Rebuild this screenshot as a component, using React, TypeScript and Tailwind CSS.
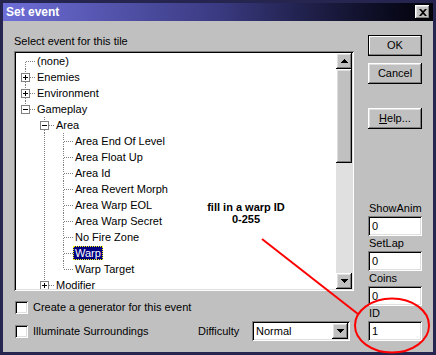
import React from 'react';

type Row = {
    label: string;
    level: number;
    guides: boolean[];
    top: boolean;
    bottom: boolean;
    box?: '+' | '-';
    selected?: boolean;
};

const L2 = [false, true];

const rows: Row[] = [
    { label: '(none)', level: 0, guides: [], top: false, bottom: true },
    { label: 'Enemies', level: 0, guides: [], top: true, bottom: true, box: '+' },
    { label: 'Environment', level: 0, guides: [], top: true, bottom: true, box: '+' },
    { label: 'Gameplay', level: 0, guides: [], top: true, bottom: false, box: '-' },
    { label: 'Area', level: 1, guides: [false], top: true, bottom: true, box: '-' },
    { label: 'Area End Of Level', level: 2, guides: L2, top: true, bottom: true },
    { label: 'Area Float Up', level: 2, guides: L2, top: true, bottom: true },
    { label: 'Area Id', level: 2, guides: L2, top: true, bottom: true },
    { label: 'Area Revert Morph', level: 2, guides: L2, top: true, bottom: true },
    { label: 'Area Warp EOL', level: 2, guides: L2, top: true, bottom: true },
    { label: 'Area Warp Secret', level: 2, guides: L2, top: true, bottom: true },
    { label: 'No Fire Zone', level: 2, guides: L2, top: true, bottom: true },
    { label: 'Warp', level: 2, guides: L2, top: true, bottom: true, selected: true },
    { label: 'Warp Target', level: 2, guides: L2, top: true, bottom: false },
    { label: 'Modifier', level: 1, guides: [false], top: true, bottom: false, box: '+' },
];

const raised = 'shadow-[inset_-1px_-1px_#000,inset_1px_1px_#fff,inset_-2px_-2px_#808080,inset_2px_2px_#dfdfdf]';
const sunken = 'shadow-[inset_1px_1px_#808080,inset_-1px_-1px_#fff,inset_2px_2px_#000,inset_-2px_-2px_#dfdfdf]';

const dot = { stroke: '#808080', strokeWidth: 1, strokeDasharray: '1 1', shapeRendering: 'crispEdges' as const };

// one indent column of the tree: guide line, connector and +/- box
const TreeCell: React.FC<{ kind: 'guide' | 'empty' | 'node'; row?: Row }> = ({ kind, row }) => (
    <svg width="19" height="16" className="shrink-0">
        {kind === 'guide' && <line x1="9.5" y1="0" x2="9.5" y2="16" {...dot} />}
        {kind === 'node' && row && (
            <>
                {row.top && <line x1="9.5" y1="0" x2="9.5" y2="8" {...dot} />}
                {row.bottom && <line x1="9.5" y1="9" x2="9.5" y2="16" {...dot} />}
                <line x1="10" y1="8.5" x2="19" y2="8.5" {...dot} />
                {row.box && (
                    <>
                        <rect x="5.5" y="4.5" width="8" height="8" fill="#fff" stroke="#808080" shapeRendering="crispEdges" />
                        <line x1="7" y1="8.5" x2="12" y2="8.5" stroke="#000" shapeRendering="crispEdges" />
                        {row.box === '+' && <line x1="9.5" y1="6" x2="9.5" y2="11" stroke="#000" shapeRendering="crispEdges" />}
                    </>
                )}
            </>
        )}
    </svg>
);

const Arrow: React.FC<{ up?: boolean }> = ({ up }) => (
    <svg width="7" height="4">
        <path d={up ? 'M3.5 0 L7 4 L0 4 Z' : 'M0 0 L7 0 L3.5 4 Z'} fill="#000" shapeRendering="crispEdges" />
    </svg>
);

const Button: React.FC<{ children: React.ReactNode; isDefault?: boolean }> = ({ children, isDefault }) => (
    <div className={`h-[21px] w-[54px] bg-[#c0c0c0] flex items-center justify-center ${isDefault ? 'border border-black shadow-[inset_-1px_-1px_#808080,inset_1px_1px_#fff]' : raised}`}>
        {children}
    </div>
);

const Field: React.FC<{ label: string; value: string }> = ({ label, value }) => (
    <div className="flex flex-col">
        <div className="h-[15px] leading-[15px] pl-[1px]">{label}</div>
        <div className={`h-[20px] w-[54px] bg-white ${sunken} flex items-center pl-[4px]`}>{value}</div>
    </div>
);

const CheckRow: React.FC<{ label: string }> = ({ label }) => (
    <div className="flex items-center gap-[5px] ml-[1px]">
        <div className={`w-[13px] h-[13px] bg-white ${sunken}`} />
        <span className="leading-[13px]">{label}</span>
    </div>
);

export default function App() {
    return (
        <div className="relative w-[436px] h-[355px] bg-[#25254f] p-[3px] font-['Liberation_Sans',Arial,sans-serif] text-[11px] text-black flex flex-col">
            {/* title bar */}
            <div className="h-[18px] flex items-center justify-between pl-[3px] pr-[3px] bg-gradient-to-r from-[#6e6ed8] via-[#3a3a82] to-[#03030a]">
                <span className="text-white font-bold text-[12px]">Set event</span>
                <div className={`w-[15px] h-[14px] bg-[#c0c0c0] ${raised} flex items-center justify-center`}>
                    <svg width="8" height="7">
                        <path d="M0 0 L2 0 L4 2 L6 0 L8 0 L5 3.5 L8 7 L6 7 L4 5 L2 7 L0 7 L3 3.5 Z" fill="#000" />
                    </svg>
                </div>
            </div>

            {/* body */}
            <div className="flex-1 bg-[#c0c0c0] flex pl-[11px]">
                <div className="flex flex-col pt-[14px] w-[340px]">
                    <div className="h-[13px] leading-[13px]">Select event for this tile</div>
                    <div className={`mt-[3px] h-[240px] bg-white ${sunken} p-[2px] flex`}>
                        <div className="flex-1 overflow-hidden">
                            {rows.map(row => (
                                <div key={row.label} className="h-[16px] flex items-center">
                                    {row.guides.map((g, i) => (
                                        <TreeCell key={i} kind={g ? 'guide' : 'empty'} />
                                    ))}
                                    <TreeCell kind="node" row={row} />
                                    <span
                                        className={`px-[2px] leading-[14px] whitespace-nowrap ${row.selected ? 'bg-[#000080] text-white outline outline-1 outline-dotted outline-[#ffff00] -outline-offset-1' : ''}`}
                                    >
                                        {row.label}
                                    </span>
                                </div>
                            ))}
                        </div>
                        <div className="w-[16px] flex flex-col bg-[#e0e0e0]">
                            <div className={`h-[16px] bg-[#c0c0c0] ${raised} flex items-center justify-center`}>
                                <Arrow up />
                            </div>
                            <div className={`h-[94px] bg-[#c0c0c0] ${raised}`} />
                            <div className="flex-1" />
                            <div className={`h-[16px] bg-[#c0c0c0] ${raised} flex items-center justify-center`}>
                                <Arrow />
                            </div>
                        </div>
                    </div>
                    <div className="mt-[10px]">
                        <CheckRow label="Create a generator for this event" />
                    </div>
                    <div className="mt-[7px] h-[20px] flex items-center">
                        <div className="w-[184px]">
                            <CheckRow label="Illuminate Surroundings" />
                        </div>
                        <span className="w-[54px]">Difficulty</span>
                        <div className={`h-[20px] w-[98px] bg-white ${sunken} flex items-center p-[2px]`}>
                            <span className="flex-1 pl-[2px]">Normal</span>
                            <div className={`h-[16px] w-[16px] bg-[#c0c0c0] ${raised} flex items-center justify-center`}>
                                <Arrow />
                            </div>
                        </div>
                    </div>
                </div>

                <div className="ml-[14px] flex flex-col pt-[14px]">
                    <Button isDefault>OK</Button>
                    <div className="mt-[7px]">
                        <Button>Cancel</Button>
                    </div>
                    <div className="mt-[24px]">
                        <Button>
                            <span><span className="underline">H</span>elp...</span>
                        </Button>
                    </div>
                    <div className="mt-[72px] flex flex-col">
                        <Field label="ShowAnim" value="0" />
                        <Field label="SetLap" value="0" />
                        <Field label="Coins" value="0" />
                        <Field label="ID" value="1" />
                    </div>
                </div>
            </div>

            {/* annotation drawn over the dialog */}
            <div className="absolute left-[196px] top-[201px] w-[100px] text-center font-bold text-[11px] leading-[12px]">
                <div>fill in a warp ID</div>
                <div>0-255</div>
            </div>
            <svg className="absolute inset-0 pointer-events-none" width="436" height="355">
                <line x1="262" y1="239" x2="358" y2="314" stroke="#ff0000" strokeWidth="2" />
                <ellipse cx="392" cy="325.5" rx="37" ry="27" fill="none" stroke="#ff0000" strokeWidth="2" />
            </svg>
        </div>
    );
}
